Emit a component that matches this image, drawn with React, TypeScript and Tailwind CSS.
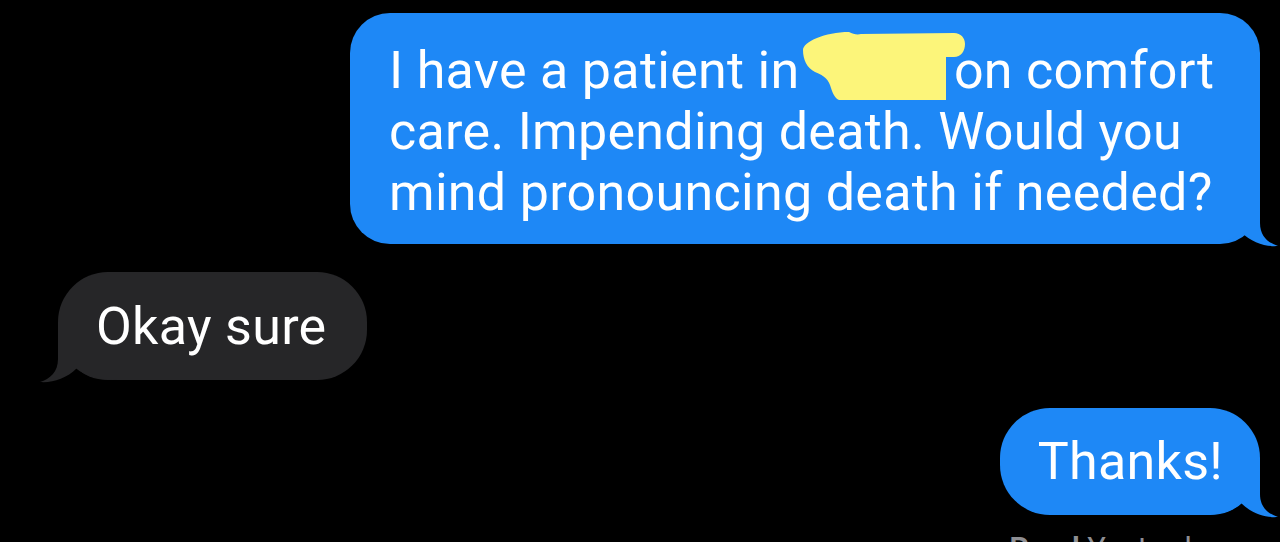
const TAIL = "M0 0 L60 0 L60 29 C60 42 68 49 78 52 C66 53 52 49 41 38 C34 46 20 50 0 50 Z";

function Tail({ side, color }: { side: "left" | "right"; color: string }) {
  return (
    <svg
      viewBox="0 0 80 54"
      className={`absolute bottom-[-4px] w-[80px] h-[54px] ${side === "right" ? "right-[-20px]" : "left-[-20px] -scale-x-100"}`}
    >
      <path d={TAIL} fill={color} />
    </svg>
  );
}

function Redacted() {
  return (
    <span className="relative inline-block w-[128px] h-[40px] align-baseline">
      <svg viewBox="0 0 166 72" className="absolute left-[-12px] top-[-18px] w-[166px] h-[72px]">
        <rect x="103" y="39" width="10" height="2" fill="#fff" />
        <rect x="142" y="34" width="2" height="9" fill="#fff" />
        <path
          d="M2 20 C2 12 24 2 48 2 C52 4 56 5 60 4 L153 3 C160 3 164 8 164 14 C164 21 160 27 153 27 L145 27 L145 70 L38 70 C34 68 32 64 30 58 C28 50 24 46 14 42 C6 38 2 30 2 20 Z"
          fill="#fcf57a"
        />
      </svg>
    </span>
  );
}

export default function App() {
  return (
    <div className="h-[542px] w-[1280px] overflow-hidden bg-black font-['Roboto',sans-serif] text-white tracking-[0.3px]">
      <div className="flex flex-col">
        <div className="relative mt-[13px] mr-[20px] w-[910px] self-end rounded-[40px] bg-[#1e88f6] pl-[39px] pt-[27px] pb-[21px] text-[52px] leading-[61px]">
          <Tail side="right" color="#1e88f6" />
          <span className="relative">
            I have a patient in <Redacted /> on comfort
            <br />
            care. Impending death. Would you
            <br />
            mind pronouncing death if needed?
          </span>
        </div>

        <div className="relative mt-[28px] ml-[58px] self-start rounded-[50px] bg-[#262628] pl-[38px] pr-[41px] pt-[24px] pb-[23px] text-[52px] leading-[61px]">
          <Tail side="left" color="#262628" />
          <span className="relative">Okay sure</span>
        </div>

        <div className="relative mt-[28px] mr-[20px] self-end rounded-[50px] bg-[#1e88f6] pl-[38px] pr-[37px] pt-[23px] pb-[23px] text-[52px] leading-[61px]">
          <Tail side="right" color="#1e88f6" />
          <span className="relative">Thanks!</span>
        </div>

        <div className="mt-[16px] mr-[57px] self-end text-[31px] leading-[36px] text-[#8e8e93] tracking-normal">
          <span className="font-semibold">Read</span> Yesterday
        </div>
      </div>
    </div>
  );
}
